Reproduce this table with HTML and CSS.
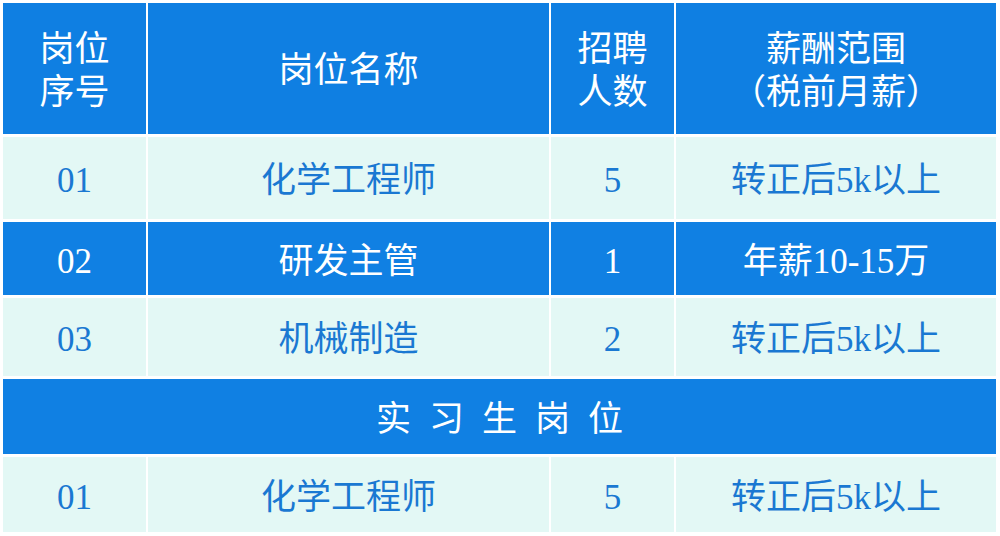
FILE: index.html
```html
<!DOCTYPE html>
<html lang="zh-CN">
<head>
<meta charset="utf-8">
<title>岗位表</title>
<link rel="stylesheet" href="styles.css">
</head>
<body>
<div class="table">
  <div class="cell head two">岗位<br>序号</div>
  <div class="cell head">岗位名称</div>
  <div class="cell head two">招聘<br>人数</div>
  <div class="cell head two">薪酬范围<br>（税前月薪）</div>

  <div class="cell light r1">01</div>
  <div class="cell light r1">化学工程师</div>
  <div class="cell light r1">5</div>
  <div class="cell light r1">转正后5k以上</div>

  <div class="cell dark r2">02</div>
  <div class="cell dark r2">研发主管</div>
  <div class="cell dark r2">1</div>
  <div class="cell dark r2">年薪10-15万</div>

  <div class="cell light r3">03</div>
  <div class="cell light r3">机械制造</div>
  <div class="cell light r3">2</div>
  <div class="cell light r3">转正后5k以上</div>

  <div class="cell dark section">实习生岗位</div>

  <div class="cell light r5">01</div>
  <div class="cell light r5">化学工程师</div>
  <div class="cell light r5">5</div>
  <div class="cell light r5">转正后5k以上</div>
</div>
</body>
</html>
```

FILE: styles.css
```css
html, body {
  margin: 0;
  padding: 0;
  background: #ffffff;
}

body {
  width: 1000px;
  height: 536px;
  overflow: hidden;
  font-family: "Liberation Serif", "Noto Sans CJK SC", serif;
}

.table {
  display: grid;
  grid-template-columns: 143px 401px 123px 320px;
  grid-template-rows: 131px 82px 73px 78px 75px 75px;
  column-gap: 2px;
  row-gap: 3px;
  padding: 3px 0 0 3px;
}

.cell {
  display: flex;
  align-items: center;
  justify-content: center;
  text-align: center;
  font-size: 35px;
  line-height: 43px;
  padding-top: 5px;
}

.head {
  background: #0f7fe2;
  color: #ffffff;
  padding-top: 4px;
}

.dark {
  background: #1080e3;
  color: #ffffff;
}

.light {
  background: #e3f8f5;
  color: #1a78d2;
}

.section {
  grid-column: 1 / -1;
  letter-spacing: 18px;
  padding-left: 18px;
  padding-top: 6px;
}
```
